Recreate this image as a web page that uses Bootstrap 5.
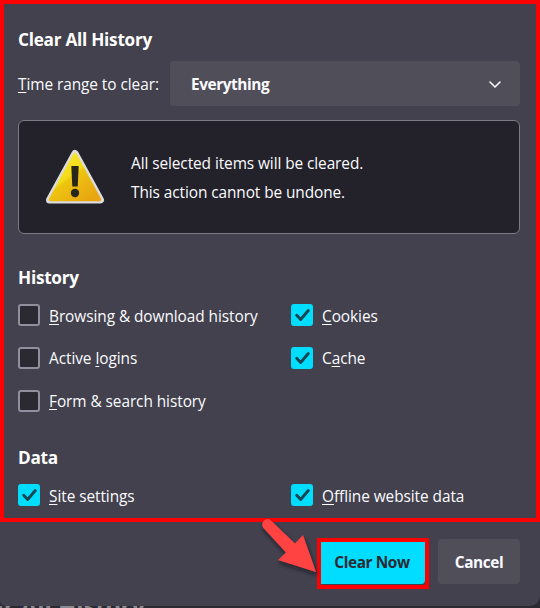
<!DOCTYPE html>
<html lang="en" data-bs-theme="dark">
<head>
<meta charset="utf-8">
<meta name="viewport" content="width=device-width, initial-scale=1">
<title>Clear All History</title>
<link href="https://cdn.jsdelivr.net/npm/bootstrap@5.3.0/dist/css/bootstrap.min.css" rel="stylesheet">
<style>
body{width:540px;height:608px;background:#2b2a33;font:400 15.4px/22px "Open Sans","Noto Sans",sans-serif;color:#fbfbfe;letter-spacing:-.06px}
.dialog-box{height:606px;background:#42414d;border-radius:0 0 10px 5px}
.options{height:522px;border:4px solid #f00;padding:24px 16px 0 14px}
h1,h2{font-size:17.2px;line-height:24px;font-weight:700;margin:0;letter-spacing:-.26px}
.range-row{margin-top:9px}
u{text-decoration-thickness:1px;text-underline-offset:2px}
.range-select{width:350px;height:45px;background:#4f4e59;border-radius:4px;padding:0 18px 0 21px;font-weight:700;letter-spacing:-.42px}
.range-label{padding-top:2px}
.range-value{padding-top:3px}
.notice{height:114px;margin-top:14px;background:#23222b;border:1px solid #7d7c86;border-radius:6px;padding-left:24px;line-height:29px}
.notice svg{margin-right:24px}
.notice-text{padding-top:2px;letter-spacing:-.08px}
.history-title{margin-top:32px;margin-bottom:14px}
.data-title{margin-top:34px;margin-bottom:14px}
.left-col{width:273px}
.check-list{row-gap:21px}
.check-item{height:22px;gap:9px}
.check-item label{padding-top:3px}
.check-item.raised label{padding-top:1px}
.form-check-input.tick{width:22px;height:22px;margin:0;flex:none;background-color:#2b2a33;border:2px solid #8f8f9d;border-radius:3px}
.form-check-input.tick:checked{background-color:#00ddff;border-color:#00ddff;background-origin:border-box;background-size:22px;background-position:center;background-image:url("data:image/svg+xml,%3Csvg xmlns='http://www.w3.org/2000/svg' viewBox='0 0 22 22'%3E%3Cpath d='M5.7 11.2l4 4.3 7.6-9' fill='none' stroke='%23124652' stroke-width='2.9' stroke-linecap='round' stroke-linejoin='round'/%3E%3C/svg%3E")}
.footer-bar{padding:16px 20px 0 0;gap:9px}
.action{border:0;border-radius:4px;padding:2px 0 0;font-size:15.4px;line-height:22px;font-weight:700;letter-spacing:-.4px}
.cancel{width:82px;height:45px;margin-top:1px;background:#4f4e59;color:#fbfbfe}
.confirm{width:104px;height:42px;padding:0 2px 0 0;background:#00ddff;color:#2b2a33;border-radius:0 0 4px 0}
.highlight{border:4px solid #f00;height:51px;width:112px}
.pointer{left:255px;top:510px;pointer-events:none}
.behind{height:2px;width:145px;font-size:24px;font-weight:700;color:#8b8a92}
.behind span{line-height:24px;margin-top:-12px}
</style>
</head>
<body class="overflow-hidden">
<main class="dialog-box">
<section class="options">
<h1>Clear All History</h1>
<div class="range-row d-flex align-items-center justify-content-between"><span class="range-label"><u>T</u>ime range to clear:</span>
<div class="range-select d-flex align-items-center justify-content-between"><span class="range-value">Everything</span><svg width="14" height="10" viewBox="0 0 14 10" fill="none" stroke="#fbfbfe" stroke-width="1.6" stroke-linecap="round" stroke-linejoin="round"><path d="M2 3l5 5 5-5"/></svg></div></div>
<div class="notice d-flex align-items-center"><svg width="64" height="60" viewBox="0 0 64 60"><defs><linearGradient id="gold" x2=".8" y2="1"><stop stop-color="#f7ed35"/><stop offset=".48" stop-color="#f3db18"/><stop offset=".52" stop-color="#eec510"/><stop offset="1" stop-color="#e9a512"/></linearGradient></defs><path d="M32 6.500L57.500 53H6.500z" fill="#dcdcdc" stroke="#dcdcdc" stroke-width="7" stroke-linejoin="round"/><path d="M32 7.500L56.500 52.500H7.500z" fill="url(#gold)" stroke="url(#gold)" stroke-width="3.500" stroke-linejoin="round"/><path d="M28.300 19h7.400l-1 20.500h-5.400z" fill="#28261a"/><circle cx="32" cy="46" r="4.200" fill="#28261a"/></svg><div class="notice-text">All selected items will be cleared.<br>This action cannot be undone.</div></div>
<h2 class="history-title">History</h2>
<div class="d-flex">
<div class="left-col check-list d-flex flex-column">
<div class="check-item d-flex align-items-center"><input class="form-check-input tick" type="checkbox" id="browsing"><label for="browsing"><u>B</u>rowsing &amp; download history</label></div>
<div class="check-item raised d-flex align-items-center"><input class="form-check-input tick" type="checkbox" id="logins"><label for="logins">Active <u>l</u>ogins</label></div>
<div class="check-item raised d-flex align-items-center"><input class="form-check-input tick" type="checkbox" id="forms"><label for="forms"><u>F</u>orm &amp; search history</label></div>
</div>
<div class="check-list d-flex flex-column">
<div class="check-item d-flex align-items-center"><input class="form-check-input tick" type="checkbox" id="cookies" checked><label for="cookies"><u>C</u>ookies</label></div>
<div class="check-item raised d-flex align-items-center"><input class="form-check-input tick" type="checkbox" id="cache" checked><label for="cache">C<u>a</u>che</label></div>
</div>
</div>
<h2 class="data-title">Data</h2>
<div class="d-flex">
<div class="left-col check-item d-flex align-items-center"><input class="form-check-input tick" type="checkbox" id="site" checked><label for="site"><u>S</u>ite settings</label></div>
<div class="check-item d-flex align-items-center"><input class="form-check-input tick" type="checkbox" id="offline" checked><label for="offline"><u>O</u>ffline website data</label></div>
</div>
</section>
<footer class="footer-bar d-flex justify-content-end align-items-start">
<div class="highlight"><button class="btn action confirm" type="button">Clear Now</button></div>
<button class="btn action cancel" type="button">Cancel</button>
</footer>
</main>
<div class="behind d-flex justify-content-end overflow-hidden text-nowrap"><span>Clear All History</span></div>
<svg class="pointer position-absolute" width="80" height="80" viewBox="0 0 80 80"><defs><filter id="shade" x="-20%" y="-20%" width="150%" height="150%"><feDropShadow dx="1" dy="3" stdDeviation="2" flood-color="#15141a" flood-opacity=".65"/></filter></defs><path d="M16 10.500L40 33.500 48 25 61 62 23 50 31 42.500 8.500 18C4.500 13 11 6 16 10.500z" fill="#ff4343" filter="url(#shade)"/></svg>
</body>
</html>
